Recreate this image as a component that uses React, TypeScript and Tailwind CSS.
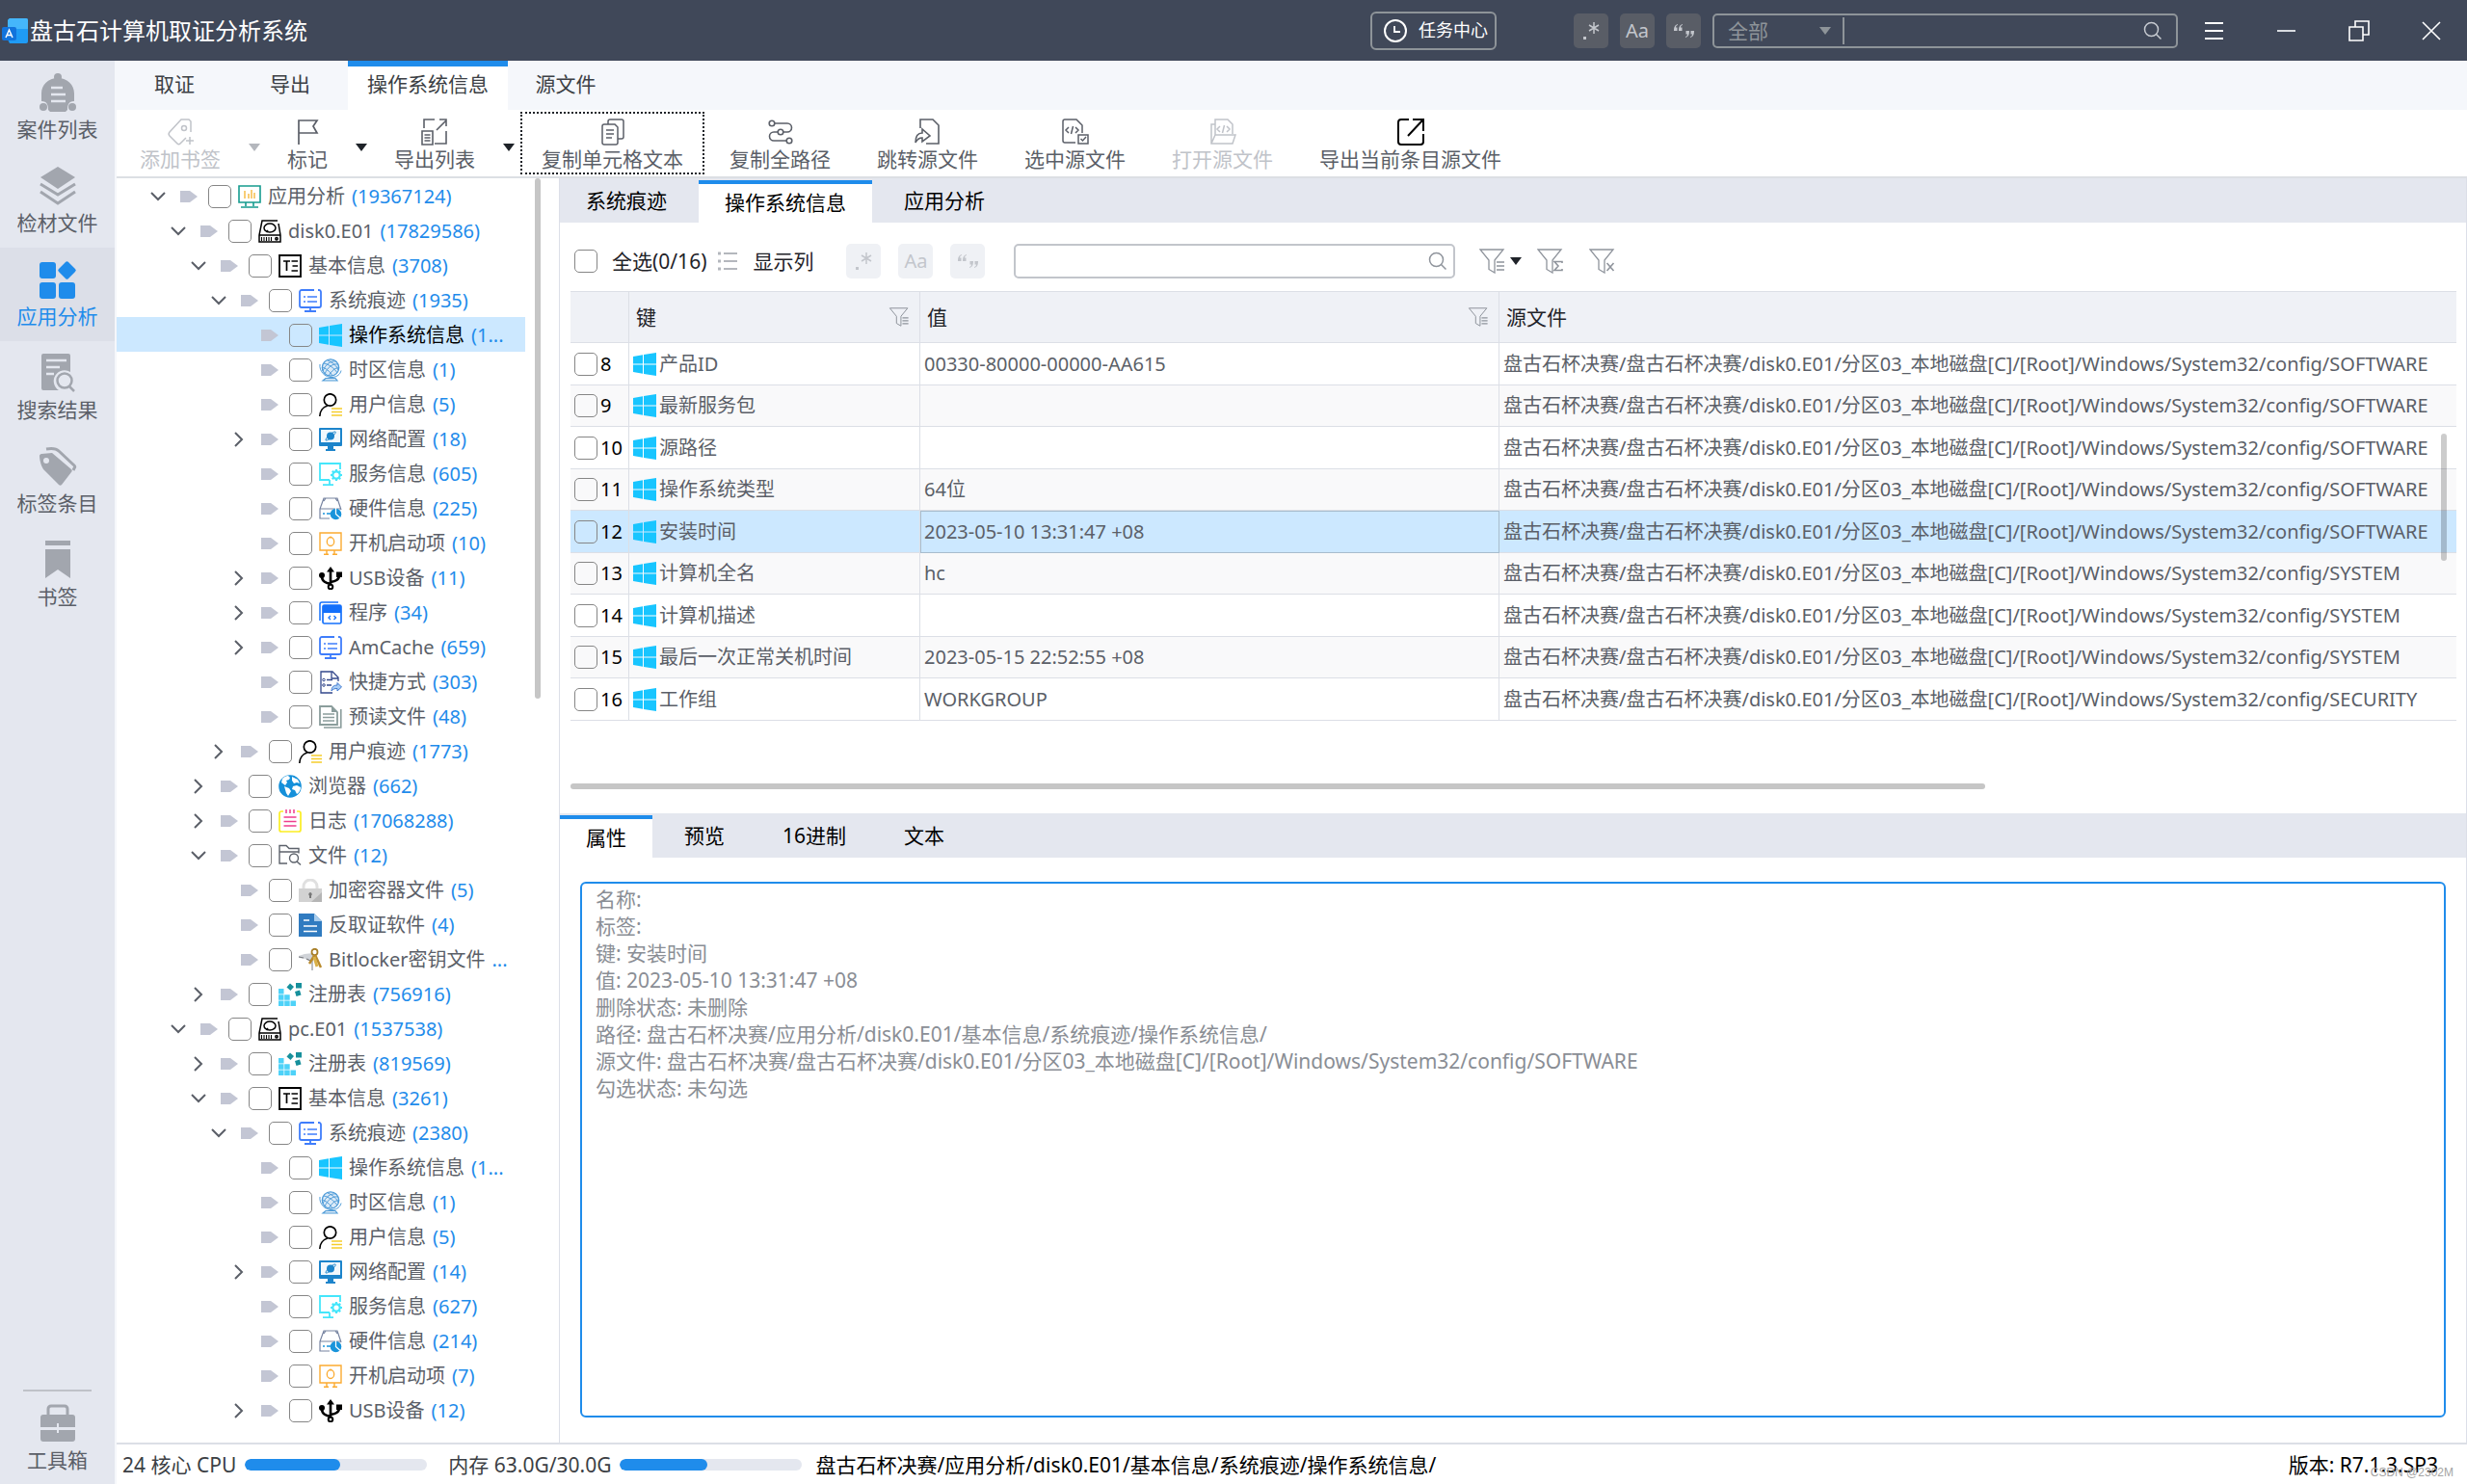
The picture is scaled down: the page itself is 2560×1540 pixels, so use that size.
import { useState } from "react";
import type { ReactNode } from "react";
import clsx from "clsx";

/* ---------- icons ---------- */

function Svg({ children, className = "size-6", box = "0 0 24 24" }: { children: ReactNode; className?: string; box?: string }) {
  return (
    <svg viewBox={box} className={clsx("shrink-0", className)} fill="none" aria-hidden="true">
      {children}
    </svg>
  );
}

const treeIcons: Record<string, ReactNode> = {
  chart: (
    <Svg>
      <g stroke="#169c8f" strokeWidth="1.6">
        <path d="M1 1h22v17H1zM8 18v4M16 18v4M3 23h18" />
      </g>
      <path d="M7 6v8M11 9v5M14 5v9M17 8v6" stroke="#f5b83d" strokeWidth="1.4" />
    </Svg>
  ),
  disk: (
    <Svg>
      <g stroke="#000" strokeWidth="1.5">
        <path d="M20 1H4L1 16v7h22v-7L21 4M1 16h22" />
        <ellipse cx="12" cy="8.5" rx="6" ry="4.5" />
        <path d="M8.5 13l1.5-2" />
        <circle cx="19" cy="19.7" r="1.2" />
        <path d="M3.500 18v4M6 18v4M8.500 18v4M11 18v4M13.500 18v4" strokeWidth="1.1" />
      </g>
    </Svg>
  ),
  info: (
    <Svg>
      <path d="M1 1h22v22H1z" stroke="#000" strokeWidth="1.8" />
      <path d="M5 7h7M8.500 7v10M13.500 7H20M14.500 12H20M13.500 17H20" stroke="#000" strokeWidth="1.7" />
    </Svg>
  ),
  trace: (
    <Svg>
      <path d="M16 1H3a2 2 0 0 0-2 2v14a2 2 0 0 0 2 2h18a2 2 0 0 0 2-2V3a2 2 0 0 0-2-2h-1M12 19v4M6 23h12" stroke="#3f7dfb" strokeWidth="1.8" />
      <path d="M5 8h2M9 8h10M5 13h2M9 13h10" stroke="#3f7dfb" strokeWidth="1.7" />
    </Svg>
  ),
  windows: (
    <Svg>
      <path d="M0 4l10-1.800V11.400H0zM11 2l13-2v11.400H11zM0 12.500h10v9.300L0 20zM11 12.500h13V24l-13-2z" fill="#18c5ff" />
    </Svg>
  ),
  timezone: (
    <Svg>
      <circle cx="12" cy="9.500" r="8.700" fill="#dbeaf7" stroke="#4e9bd8" strokeWidth="1.3" />
      <path d="M4 13C7 6 12 2 18 3M6 16C9 9 14 5 20 6M10 18C13 13 17 9 21 10M5 5c5 1 11 5 14 10M9 2c5 2 10 6 11 10M3 9c4 1 8 4 11 9M1 6c-1 7 5 14 13 13.500 5-.5 8-3 9-7" stroke="#4e9bd8" strokeWidth="1" />
      <path d="M12 19v2M4 23h15l-2-2.500H7z" fill="#dbeaf7" stroke="#4e9bd8" strokeWidth="1.2" />
    </Svg>
  ),
  user: (
    <Svg>
      <path d="M.8 24c0-5 3-9.500 8-11" stroke="#000" strokeWidth="1.6" />
      <circle cx="11.500" cy="7" r="6.200" stroke="#000" strokeWidth="1.7" />
      <path d="M13 16h11M13 19.500h11M13 23h11" stroke="#f6cd2b" strokeWidth="1.7" />
    </Svg>
  ),
  network: (
    <Svg>
      <path d="M1 0h22a1 1 0 0 1 1 1v17a1 1 0 0 1-1 1H1a1 1 0 0 1-1-1V1a1 1 0 0 1 1-1z" fill="#1c84cb" />
      <path d="M2 2h20v13H2z" fill="#f2f8fd" />
      <circle cx="12" cy="8.500" r="4" fill="#1c84cb" />
      <path d="M7 13c-1-2 8-10 10-9s-7 10-10 9z" stroke="#1c84cb" strokeWidth=".9" />
      <path d="M9 19h6v3h2v2H7v-2h2z" fill="#1c84cb" />
    </Svg>
  ),
  service: (
    <Svg>
      <path d="M11 18H1V1h21v6M11 18v5M4 23.200h11" stroke="#45e6fb" strokeWidth="1.8" />
      <circle cx="18" cy="13" r="3.700" stroke="#45e6fb" strokeWidth="2.200" />
      <path d="M18 7v3M18 16v3M12 13h3M21 13h3M13.800 8.800l2 2M20 15l2.200 2.200M22.200 8.800l-2 2M16 15l-2.200 2.200" stroke="#45e6fb" strokeWidth="2.200" />
    </Svg>
  ),
  hardware: (
    <Svg>
      <path d="M23 13L19 1H5L1 12v10h10M1 12h22M7 1l-2 3M17 1l2 3" stroke="#7683a0" strokeWidth="1.2" />
      <path d="M4 17h2M8 17h4" stroke="#1894db" strokeWidth="1.500" />
      <circle cx="17.500" cy="17.500" r="5.800" fill="#1894db" />
      <path d="M17.500 11v6.500l4.500 4" stroke="#fff" strokeWidth="1.200" />
    </Svg>
  ),
  boot: (
    <Svg>
      <path d="M1 1h22v18H1zM8 19v4M16 19v4M5 23.300h5M14 23.300h5" stroke="#fbab31" strokeWidth="1.400" />
      <ellipse cx="12" cy="10" rx="3.700" ry="4.500" stroke="#fbab31" strokeWidth="1.300" />
      <path d="M12 4.500v2" stroke="#fbab31" />
    </Svg>
  ),
  usb: (
    <Svg>
      <path d="M12 3v17M12 18c-4-1-9-2-9-8M12 16c5-1 9-2 9-7" stroke="#000" strokeWidth="2.600" />
      <path d="M12 0l4 5.500H8zM18 5.500h6V11h-6z" fill="#000" />
      <circle cx="3" cy="9" r="3" fill="#000" />
      <circle cx="12" cy="21" r="2.300" fill="#fff" stroke="#000" strokeWidth="2" />
    </Svg>
  ),
  program: (
    <Svg>
      <path d="M1 20V3a2 2 0 0 1 2-2h17" stroke="#1470fb" strokeWidth="1.500" />
      <rect x="4" y="4" width="19" height="19" rx="1.500" stroke="#1470fb" strokeWidth="1.700" />
      <path d="M4 4h19v8H4z" fill="#1470fb" />
      <path d="M12 15l-2 2 2 2M15.500 15l2 2-2 2" stroke="#1470fb" strokeWidth="1.300" />
    </Svg>
  ),
  shortcut: (
    <Svg>
      <path d="M20 11V7l-6-6H2v22h12M13 1v7h7" stroke="#33488c" strokeWidth="1.300" />
      <circle cx="5" cy="9.500" r="1.300" stroke="#33488c" />
      <circle cx="5" cy="15" r="1.300" stroke="#33488c" />
      <path d="M8 9.500h6M8 15h5" stroke="#33488c" strokeWidth="1.300" />
      <path d="M13 21c0-4 2-6 6-6v-2.500l4.500 4.500-4.500 4v-2.500c-3 0-4.500.5-6 2.500z" fill="#a8cdf6" stroke="#3f78cf" />
    </Svg>
  ),
  prefetch: (
    <Svg>
      <path d="M1 1h12l6 6v13H1z" stroke="#8b9d9c" strokeWidth="1.800" />
      <path d="M13 1v6h6z" fill="#8b9d9c" />
      <path d="M4 9h12M4 12.500h12M4 16h12M22.800 4v19H5" stroke="#8b9d9c" strokeWidth="1.600" />
    </Svg>
  ),
  browser: (
    <Svg>
      <circle cx="12" cy="12" r="11.800" fill="#1590da" />
      <path d="M4 4c2-2 4-3 6-3l2 2-1 2-3 1 1 2-2 3-4-3zM14 2l6 3 2 4-3-1-3 1-2-3zM15 12l4-1 4 2c0 3-2 6-4 7l-2-4-3-1zM6 12l5 2 2 3-3 5-2-3z" fill="#fff" />
    </Svg>
  ),
  log: (
    <Svg>
      <path d="M5 2H3a2 2 0 0 0-2 2v17a2 2 0 0 0 2 2h18a2 2 0 0 0 2-2V4a2 2 0 0 0-2-2h-2" stroke="#fbee23" strokeWidth="1.700" />
      <path d="M8 0v4M12 0v4M16 0v4M5.500 8h13M5.500 12.500h13M5.500 17h13" stroke="#ef3d8d" strokeWidth="1.500" />
    </Svg>
  ),
  folder: (
    <Svg>
      <path d="M9 20H1V1.500h7l3 3h10v5M1 8h20" stroke="#5d626b" strokeWidth="1.400" />
      <circle cx="16" cy="14.500" r="4.500" stroke="#5d626b" strokeWidth="1.400" />
      <path d="M19 18l4 3.500" stroke="#5d626b" strokeWidth="1.500" />
    </Svg>
  ),
  lock: (
    <Svg>
      <path d="M5 11V8a7 7 0 0 1 14 0v3" stroke="#e0e0e0" strokeWidth="3" />
      <path d="M0 10h24v14H0z" fill="#d2d2d2" />
      <path d="M13 24l11-10v10z" fill="#b5b5b5" />
      <path d="M12 14a2 2 0 0 1 1 3.500V20h-2v-2.500A2 2 0 0 1 12 14z" fill="#777" />
    </Svg>
  ),
  antiforensic: (
    <Svg>
      <path d="M0 0h16l8 8v16H0z" fill="#307bc0" />
      <path d="M16 0l8 8h-8z" fill="#a9cdec" />
      <path d="M5 7h6M5 13h14M5 18.500h14" stroke="#fff" strokeWidth="1.700" />
    </Svg>
  ),
  key: (
    <Svg>
      <path d="M0 8l6-2 9-1v6l-4 2-4-2-7-1z" fill="#d0d3d8" />
      <path d="M0 9l5 1M8 11l4 2" stroke="#77797e" strokeWidth="1.200" />
      <path d="M14 11v12" stroke="#a6a9ae" strokeWidth="1.500" />
      <ellipse cx="16.500" cy="4" rx="3" ry="3.200" stroke="#a87f28" strokeWidth="1.800" />
      <path d="M16 8l-5 8M17 7l6 13" stroke="#b98a2c" strokeWidth="2.500" />
      <path d="M16 9l3 10" stroke="#d9b048" strokeWidth="3" />
    </Svg>
  ),
  registry: (
    <Svg>
      <path d="M0 6h5.500v5.500H0zM0 12.200h5.500v5.500H0zM6.200 12.200h5.500v5.500H6.200zM0 18.500h5.500V24H0zM6.200 18.500h5.500V24H6.200zM12.500 18.500H18V24h-5.500z" fill="#4ed2f8" />
      <path d="M12 .5l4 3.500-3.500 4-4-3.500zM18 0h6v5.500h-6zM17 9l5-1.500 1.500 5-5 1.500z" fill="#17909c" />
    </Svg>
  ),
};

const toolIcons: Record<string, ReactNode> = {
  tag: (
    <Svg className="size-7" box="0 0 28 28">
      <path d="M25 14V3l-2-2H15L3 14a3 3 0 0 0 0 4l8 8a2 2 0 0 0 3 0l6-6M20 23h8M24 19v8" stroke="currentColor" strokeWidth="1.500" />
      <circle cx="18" cy="10" r="2.500" stroke="currentColor" strokeWidth="1.500" />
    </Svg>
  ),
  flag: (
    <Svg className="size-7" box="0 0 28 28">
      <path d="M5 27V2h19l-4 6 4 7H5" stroke="currentColor" strokeWidth="1.700" />
    </Svg>
  ),
  export: (
    <Svg className="size-7" box="0 0 28 28">
      <path d="M3 10V1h11M14 26h12V13M1 13h11v14H1zM3.500 17h6M3.500 20h6M3.500 23h6M16 12L26 2M19 1h7v7" stroke="currentColor" strokeWidth="1.600" />
    </Svg>
  ),
  copy: (
    <Svg className="size-7" box="0 0 28 28">
      <path d="M9 6V3a2 2 0 0 1 2-2h12a2 2 0 0 1 2 2v16a2 2 0 0 1-2 2h-4M6 6h10l3 3v16a2 2 0 0 1-2 2H5a2 2 0 0 1-2-2V8a2 2 0 0 1 2-2zM7 12h8M7 16h8M7 20h6" stroke="currentColor" strokeWidth="1.500" />
    </Svg>
  ),
  route: (
    <Svg className="size-7" box="0 0 28 28">
      <g stroke="currentColor" strokeWidth="1.600">
        <circle cx="5" cy="5" r="2.800" />
        <circle cx="14" cy="14" r="2.800" />
        <circle cx="23" cy="23" r="2.800" />
        <path d="M8 5h13a4.500 4.500 0 0 1 0 9h-4M11 14H7a4.500 4.500 0 0 0 0 9h13" />
      </g>
    </Svg>
  ),
  jump: (
    <Svg className="size-7" box="0 0 28 28">
      <path d="M6 10V1h13l6 6v19H12M1 25c0-7 3-10 7-10v-4l8 7-8 6v-4c-3 0-5 1-7 5z" stroke="currentColor" strokeWidth="1.600" />
    </Svg>
  ),
  pick: (
    <Svg className="size-7" box="0 0 28 28">
      <path d="M14 25H3a2 2 0 0 1-2-2V3a2 2 0 0 1 2-2h12l6 6v8M17 17h10v9H17zM19.500 21l2 2 3.500-4M7 9l-3 3 3 3M14 9l3 3-3 3M11.500 8l-2 8" stroke="currentColor" strokeWidth="1.500" />
    </Svg>
  ),
  open: (
    <Svg className="size-7" box="0 0 28 28">
      <path d="M6 17V1h13l5 5v10M6 6H2v20h22l3-9H6L2 26M11 8l-3 3 3 3M18 8l3 3-3 3M15.500 7l-2 8" stroke="currentColor" strokeWidth="1.500" />
    </Svg>
  ),
  external: (
    <Svg className="size-7" box="0 0 28 28">
      <path d="M12 1H4a3 3 0 0 0-3 3v20a3 3 0 0 0 3 3h20a3 3 0 0 0 3-3v-8M16 1h11v12M26 2L11 18" stroke="#000" strokeWidth="2" />
    </Svg>
  ),
};

const railIcons: Record<string, ReactNode> = {
  cases: (
    <Svg className="size-10" box="0 0 40 40">
      <g fill="currentColor">
        <circle cx="20" cy="4" r="4" />
        <path d="M20 5c10 0 17 7 17 16v8c-6 0-7 4-7 9l-2 2H12l-2-2c0-5-1-9-7-9v-8C3 12 10 5 20 5z" />
        <circle cx="5" cy="35" r="4" />
        <circle cx="35" cy="35" r="4" />
      </g>
      <path d="M13 15h12M13 22h15M13 29h15" stroke="#e4e7ef" strokeWidth="2.500" />
    </Svg>
  ),
  layers: (
    <Svg className="size-10" box="0 0 40 40">
      <path d="M20 0l18 11-18 12L2 11z" fill="currentColor" />
      <path d="M2 18l18 11 18-11M2 26l18 12 18-12" stroke="currentColor" strokeWidth="3" />
    </Svg>
  ),
  apps: (
    <Svg className="size-10" box="0 0 40 40">
      <g fill="currentColor">
        <rect x="1" y="2" width="17" height="17" rx="3" />
        <rect x="1" y="23" width="17" height="17" rx="3" />
        <rect x="21" y="23" width="17" height="17" rx="3" />
        <path d="M28 2a2 2 0 0 1 3 0l7 7a2 2 0 0 1 0 3l-7 7a2 2 0 0 1-3 0l-7-7a2 2 0 0 1 0-3z" />
      </g>
    </Svg>
  ),
  search: (
    <Svg className="size-10" box="0 0 40 40">
      <path d="M5 0h26a2 2 0 0 1 2 2v17a11 11 0 0 0-12 19H5a2 2 0 0 1-2-2V2a2 2 0 0 1 2-2z" fill="currentColor" />
      <path d="M8 7h21M8 14h14M8 21h8" stroke="#e4e7ef" strokeWidth="2.500" />
      <circle cx="27" cy="28" r="7.500" stroke="currentColor" strokeWidth="2.500" />
      <path d="M32 34l5 5" stroke="currentColor" strokeWidth="2.500" />
    </Svg>
  ),
  tags: (
    <Svg className="size-10" box="0 0 40 40">
      <path d="M3 7l11-1 20 17c1 1 1 2 0 3L24 39c-1 1-2 1-3 0L5 23C2 18 1 12 1 9c0-1 1-2 2-2z" fill="currentColor" />
      <path d="M8 2c6-1 10-1 13 2l16 15c1 1 1 2 0 3l-1 2" stroke="currentColor" strokeWidth="3" />
      <circle cx="8" cy="14" r="3" fill="#e4e7ef" />
    </Svg>
  ),
  bookmark: (
    <Svg className="size-10" box="0 0 40 40">
      <path d="M7 0h26v5H7zM7 9h26v30l-13-9-13 9z" fill="currentColor" />
    </Svg>
  ),
  toolbox: (
    <Svg className="size-10" box="0 0 40 40">
      <path d="M10 12V5a3 3 0 0 1 3-3h14a3 3 0 0 1 3 3v7" stroke="currentColor" strokeWidth="3" />
      <path d="M5 11h30a3 3 0 0 1 3 3v10H2V14a3 3 0 0 1 3-3zM2 27h36v9a3 3 0 0 1-3 3H5a3 3 0 0 1-3-3z" fill="currentColor" />
      <path d="M20 20v10M16 25.500h8" stroke="#e4e7ef" strokeWidth="2" />
    </Svg>
  ),
};

function Magnifier({ className }: { className?: string }) {
  return (
    <Svg className={clsx("size-5", className)} box="0 0 20 20">
      <circle cx="8.500" cy="8.500" r="7" stroke="currentColor" strokeWidth="1.500" />
      <path d="M13.500 13.500l5 5" stroke="currentColor" strokeWidth="1.500" />
    </Svg>
  );
}

function Funnel({ mark, className = "size-6" }: { mark: "list" | "sum" | "clear"; className?: string }) {
  const marks = {
    list: "M18 14h8M18 18h8M18 22h8",
    sum: "M26 15v-1.500h-8l4 4.500-4 4.500h8V21",
    clear: "M18.500 15l7 8M25.500 15l-7 8",
  };
  return (
    <Svg className={className} box="0 0 27 26">
      <path d="M1 1h24l-9 11v13l-6-3.500V12z" stroke="#8f949c" strokeWidth="1.300" />
      <path d={marks[mark]} stroke="#8f949c" strokeWidth="1.600" />
    </Svg>
  );
}

function Caret({ className = "text-[#1f2329]" }: { className?: string }) {
  return (
    <Svg className={clsx("h-2 w-3", className)} box="0 0 12 8">
      <path d="M0 0h12L6 8z" fill="currentColor" />
    </Svg>
  );
}

/* ---------- data ---------- */

type Node = { depth: number; icon: string; name: string; count: string; open?: boolean };

const tree: Node[] = [
  { depth: 0, icon: "chart", name: "应用分析", count: "(19367124)", open: true },
  { depth: 1, icon: "disk", name: "disk0.E01", count: "(17829586)", open: true },
  { depth: 2, icon: "info", name: "基本信息", count: "(3708)", open: true },
  { depth: 3, icon: "trace", name: "系统痕迹", count: "(1935)", open: true },
  { depth: 4, icon: "windows", name: "操作系统信息", count: "(1..." },
  { depth: 4, icon: "timezone", name: "时区信息", count: "(1)" },
  { depth: 4, icon: "user", name: "用户信息", count: "(5)" },
  { depth: 4, icon: "network", name: "网络配置", count: "(18)", open: false },
  { depth: 4, icon: "service", name: "服务信息", count: "(605)" },
  { depth: 4, icon: "hardware", name: "硬件信息", count: "(225)" },
  { depth: 4, icon: "boot", name: "开机启动项", count: "(10)" },
  { depth: 4, icon: "usb", name: "USB设备", count: "(11)", open: false },
  { depth: 4, icon: "program", name: "程序", count: "(34)", open: false },
  { depth: 4, icon: "trace", name: "AmCache", count: "(659)", open: false },
  { depth: 4, icon: "shortcut", name: "快捷方式", count: "(303)" },
  { depth: 4, icon: "prefetch", name: "预读文件", count: "(48)" },
  { depth: 3, icon: "user", name: "用户痕迹", count: "(1773)", open: false },
  { depth: 2, icon: "browser", name: "浏览器", count: "(662)", open: false },
  { depth: 2, icon: "log", name: "日志", count: "(17068288)", open: false },
  { depth: 2, icon: "folder", name: "文件", count: "(12)", open: true },
  { depth: 3, icon: "lock", name: "加密容器文件", count: "(5)" },
  { depth: 3, icon: "antiforensic", name: "反取证软件", count: "(4)" },
  { depth: 3, icon: "key", name: "Bitlocker密钥文件", count: "..." },
  { depth: 2, icon: "registry", name: "注册表", count: "(756916)", open: false },
  { depth: 1, icon: "disk", name: "pc.E01", count: "(1537538)", open: true },
  { depth: 2, icon: "registry", name: "注册表", count: "(819569)", open: false },
  { depth: 2, icon: "info", name: "基本信息", count: "(3261)", open: true },
  { depth: 3, icon: "trace", name: "系统痕迹", count: "(2380)", open: true },
  { depth: 4, icon: "windows", name: "操作系统信息", count: "(1..." },
  { depth: 4, icon: "timezone", name: "时区信息", count: "(1)" },
  { depth: 4, icon: "user", name: "用户信息", count: "(5)" },
  { depth: 4, icon: "network", name: "网络配置", count: "(14)", open: false },
  { depth: 4, icon: "service", name: "服务信息", count: "(627)" },
  { depth: 4, icon: "hardware", name: "硬件信息", count: "(214)" },
  { depth: 4, icon: "boot", name: "开机启动项", count: "(7)" },
  { depth: 4, icon: "usb", name: "USB设备", count: "(12)", open: false },
];

const configDir = "盘古石杯决赛/盘古石杯决赛/disk0.E01/分区03_本地磁盘[C]/[Root]/Windows/System32/config/";

const rows = [
  { no: 8, name: "产品ID", value: "00330-80000-00000-AA615", hive: "SOFTWARE" },
  { no: 9, name: "最新服务包", value: "", hive: "SOFTWARE" },
  { no: 10, name: "源路径", value: "", hive: "SOFTWARE" },
  { no: 11, name: "操作系统类型", value: "64位", hive: "SOFTWARE" },
  { no: 12, name: "安装时间", value: "2023-05-10 13:31:47 +08", hive: "SOFTWARE" },
  { no: 13, name: "计算机全名", value: "hc", hive: "SYSTEM" },
  { no: 14, name: "计算机描述", value: "", hive: "SYSTEM" },
  { no: 15, name: "最后一次正常关机时间", value: "2023-05-15 22:52:55 +08", hive: "SYSTEM" },
  { no: 16, name: "工作组", value: "WORKGROUP", hive: "SECURITY" },
];

const railItems = [
  { icon: "cases", label: "案件列表" },
  { icon: "layers", label: "检材文件" },
  { icon: "apps", label: "应用分析", active: true },
  { icon: "search", label: "搜索结果" },
  { icon: "tags", label: "标签条目" },
  { icon: "bookmark", label: "书签" },
];

const tools = [
  { icon: "tag", label: "添加书签", menu: true, disabled: true },
  { icon: "flag", label: "标记", menu: true },
  { icon: "export", label: "导出列表", menu: true },
  { icon: "copy", label: "复制单元格文本", focused: true },
  { icon: "route", label: "复制全路径" },
  { icon: "jump", label: "跳转源文件" },
  { icon: "pick", label: "选中源文件" },
  { icon: "open", label: "打开源文件", disabled: true },
  { icon: "external", label: "导出当前条目源文件" },
];

const details = `名称:
标签:
键: 安装时间
值: 2023-05-10 13:31:47 +08
删除状态: 未删除
路径: 盘古石杯决赛/应用分析/disk0.E01/基本信息/系统痕迹/操作系统信息/
源文件: ${configDir}SOFTWARE
勾选状态: 未勾选`;

/* ---------- pieces ---------- */

const checkbox = "size-6 shrink-0 appearance-none rounded-[5px] border border-[#868686] checked:bg-[#1f8ceb]";

function MatchButtons({ dark }: { dark?: boolean }) {
  const cls = clsx(
    "flex size-9 items-center justify-center rounded-[5px] text-[20px] leading-none",
    dark ? "bg-[#595d66] text-[#c3c6cc]" : "bg-[#eff1f5] text-[#c3c6cc]"
  );
  return (
    <>
      <button className={cls} aria-label="正则表达式">
        <Svg box="0 0 24 24">
          <path d="M15 3v12M10 6l10 6M20 6l-10 6" stroke="currentColor" strokeWidth="1.500" />
          <path d="M4 18h3v3H4z" fill="currentColor" />
        </Svg>
      </button>
      <button className={cls} aria-label="区分大小写">Aa</button>
      <button className={cls} aria-label="全词匹配">
        <Svg box="0 0 24 24">
          <path d="M6 5C3 6 2 8 2 12h3.500V8.500H4C4 7 5 6 6 6zM11 5C8 6 7 8 7 12h3.500V8.500H9C9 7 10 6 11 6zM14 19c3-1 4-3 4-7h-3.500v3.500H16c0 1.500-1 2.500-2 2.500zM19 19c3-1 4-3 4-7h-3.500v3.500H21c0 1.500-1 2.500-2 2.500z" fill="currentColor" />
        </Svg>
      </button>
    </>
  );
}

function TitleBar() {
  const winButton = "flex h-full w-[75px] items-center justify-center";
  return (
    <header className="flex h-[63px] shrink-0 items-center bg-[#404859] text-white">
      <Svg className="ml-0.5 size-7" box="0 0 28 28">
        <path d="M8 1h17a2 2 0 0 1 2 2v22a2 2 0 0 1-2 2H8l-2-4V3z" fill="#1f9bf5" />
        <path d="M8 1h17a2 2 0 0 1 2 2v9H6V3z" fill="#45b6fb" />
        <rect x="0" y="10" width="15" height="14" rx="2" fill="#1273dc" />
        <path d="M4 21l3.500-8 3.500 8M5.500 18.500h4" stroke="#fff" strokeWidth="1.500" />
      </Svg>
      <h1 className="ml-px text-[24px] leading-8">盘古石计算机取证分析系统</h1>

      <button className="mr-20 ml-auto flex h-10 w-[131px] items-center gap-3 rounded-md border-2 border-[#8e9499] pl-3 text-[18px] whitespace-nowrap">
        <Svg>
          <circle cx="12" cy="12" r="11" stroke="#fff" strokeWidth="2" />
          <path d="M11 7v6h6" stroke="#fff" strokeWidth="1.800" />
        </Svg>
        任务中心
      </button>
      <div className="flex items-center gap-3">
        <MatchButtons dark />
        <div className="flex h-9 w-[483px] items-center rounded-[5px] border-2 border-[#8e9499] text-[#8e9499]">
          <div className="flex h-7 w-[135px] items-center border-r-2 border-[#8e9499] pr-3">
            <select aria-label="搜索范围" className="min-w-0 flex-1 appearance-none bg-transparent pl-3.5 text-[21px] leading-7 outline-none">
              <option>全部</option>
            </select>
            <Caret className="text-[#8e9499]" />
          </div>
          <input aria-label="搜索" className="min-w-0 flex-1 bg-transparent px-2 text-[20px] outline-none" />
          <Magnifier className="mr-3.5 text-[#c6cad0]" />
        </div>
      </div>
      <button className={winButton} aria-label="菜单">
        <Svg className="size-5" box="0 0 20 20">
          <path d="M0 2h19M0 10h19M0 18h19" stroke="#fff" strokeWidth="1.800" />
        </Svg>
      </button>
      <button className={winButton} aria-label="最小化">
        <Svg className="size-5" box="0 0 20 20">
          <path d="M0 10h19" stroke="#d8dbe0" strokeWidth="2" />
        </Svg>
      </button>
      <button className={winButton} aria-label="还原">
        <Svg className="size-6" box="0 0 24 24">
          <path d="M2 8h14v14H2zM8 8V2h14v14h-6" stroke="#fff" strokeWidth="1.600" />
        </Svg>
      </button>
      <button className={winButton} aria-label="关闭">
        <Svg className="size-5" box="0 0 20 20">
          <path d="M1 1l18 18M19 1L1 19" stroke="#fff" strokeWidth="1.600" />
        </Svg>
      </button>
    </header>
  );
}

function Rail() {
  return (
    <nav className="flex w-[119px] shrink-0 flex-col bg-[#e4e7ef] text-[21px] leading-7 text-[#5b5f68]">
      {railItems.map((item) => (
        <button
          key={item.label}
          className={clsx(
            "flex h-[97px] flex-col items-center gap-1 pt-[13px]",
            item.active && "bg-[#dcdfe8] text-[#1f8ceb]"
          )}
        >
          <span className={item.active ? "text-[#1f8ceb]" : "text-[#a2a6ae]"}>{railIcons[item.icon]}</span>
          {item.label}
        </button>
      ))}
      <button className="mx-6 mt-auto flex h-[98px] flex-col items-center gap-1 border-t-2 border-[#bfc2c8] pt-[13px]">
        <span className="text-[#a2a6ae]">{railIcons.toolbox}</span>
        <span className="whitespace-nowrap">工具箱</span>
      </button>
    </nav>
  );
}

function TopTabs() {
  const tabs = ["取证", "导出", "操作系统信息", "源文件"];
  return (
    <div className="flex h-[51px] bg-[#f5f7fb] text-[21px] leading-7 text-[#3c3f45]">
      {tabs.map((tab, i) => (
        <button
          key={tab}
          className={clsx(
            "min-w-[120px] border-t-6 px-5 pb-2.5",
            i === 2 ? "border-[#1f8ceb] bg-white" : "border-transparent"
          )}
        >
          {tab}
        </button>
      ))}
    </div>
  );
}

function Toolbar() {
  return (
    <div className="flex h-[71px] border-b-2 border-[#dcdfe4] bg-white text-[21px] leading-7 text-[#5b5f68]">
      {tools.map((tool) => (
        <div key={tool.label} className="flex">
          <button
            disabled={tool.disabled}
            className={clsx(
              "flex flex-col items-center px-6 pt-[9px] whitespace-nowrap",
              tool.disabled && "text-[#c0c3c9]",
              tool.focused && "outline-2 -outline-offset-4 outline-dotted outline-[#1f2329]"
            )}
          >
            {toolIcons[tool.icon]}
            {tool.label}
          </button>
          {tool.menu && (
            <button aria-label={`${tool.label}选项`} disabled={tool.disabled} className="flex w-[21px] items-center justify-center pt-2">
              <Caret className={tool.disabled ? "text-[#b4b7bd]" : "text-[#1f2329]"} />
            </button>
          )}
        </div>
      ))}
    </div>
  );
}

function Tree() {
  const [selected, setSelected] = useState(4);
  return (
    <aside className="flex w-[460px] shrink-0 items-start border-r border-[#dcdfe8] bg-white">
      <ul className="w-[424px] text-[20px] leading-7 text-[#5b5f68]">
        {tree.map((node, i) => (
          <li
            key={i}
            onClick={() => setSelected(i)}
            className={clsx("flex h-9 items-center pt-px whitespace-nowrap", i === selected && "bg-[#cce8ff] text-black")}
            style={{ paddingLeft: 33 + node.depth * 21 }}
          >
            <span className="flex w-5 text-[#5b5f68]">
              {node.open !== undefined && (
                <button aria-label={node.open ? "折叠" : "展开"}>
                  <Svg className="size-5" box="0 0 20 20">
                    <path d={node.open ? "M3 6l7 7 7-7" : "M6 3l7 7-7 7"} stroke="currentColor" strokeWidth="2" />
                  </Svg>
                </button>
              )}
            </span>
            <Svg className="ml-[13px] h-3 w-[18px]" box="0 0 18 12">
              <path d="M0 0h10l8 6-8 6H0z" fill="#c3c6d4" />
            </Svg>
            <label className="ml-[11px] flex items-center gap-[7px]">
              <input type="checkbox" className={checkbox} />
              {treeIcons[node.icon]}
              <span>{node.name}</span>
              <span className="text-[#1f8ceb]">{node.count}</span>
            </label>
          </li>
        ))}
      </ul>
      <div className="ml-2.5 h-[540px] w-1.5 rounded-full bg-[#c6c6c6]" />
    </aside>
  );
}

function PaneTabs({ tabs, active }: { tabs: string[]; active: string }) {
  return (
    <div className="flex h-[46px] gap-1.5 bg-[#e4e7ef] pt-0.5 text-[21px] leading-7 text-black">
      {tabs.map((tab) => (
        <button
          key={tab}
          className={clsx("px-[27px] pb-0.5", tab === active && "border-t-4 border-[#1f8ceb] bg-white")}
        >
          {tab}
        </button>
      ))}
    </div>
  );
}

function FilterBar() {
  return (
    <div className="flex h-[71px] items-center pt-2 pl-[15px] text-[21px] leading-7 text-[#1f2329]">
      <label className="flex items-center gap-[15px]">
        <input type="checkbox" className={checkbox} />
        全选(0/16)
      </label>
      <button className="ml-3 flex items-center gap-4">
        <Svg className="size-5" box="0 0 20 20">
          <path d="M6 2h14M6 10h14M6 18h14" stroke="#b4b7bd" strokeWidth="1.800" />
          <path d="M0 2h3M0 10h3M0 18h3" stroke="#b4b7bd" strokeWidth="3" />
        </Svg>
        显示列
      </button>
      <div className="ml-[34px] flex gap-[18px]">
        <MatchButtons />
      </div>
      <div className="ml-[30px] flex h-9 w-[458px] items-center rounded-[5px] border-2 border-[#c2c5cb]">
        <input aria-label="筛选" className="min-w-0 flex-1 bg-transparent px-2 text-[20px] outline-none" />
        <Magnifier className="mr-1.5 text-[#8f949c]" />
      </div>
      <button aria-label="筛选条件" className="ml-[25px] flex items-center gap-[5px]">
        <Funnel mark="list" className="h-[26px] w-[27px]" />
        <Caret />
      </button>
      <button aria-label="汇总筛选" className="ml-4">
        <Funnel mark="sum" className="h-[26px] w-[27px]" />
      </button>
      <button aria-label="清除筛选" className="ml-[27px]">
        <Funnel mark="clear" className="h-[26px] w-[27px]" />
      </button>
    </div>
  );
}

function DataTable() {
  const th = "border-y border-r border-[#dcdfe6] pl-[7px] text-left font-normal";
  const td = "overflow-hidden border-r border-b border-[#dcdfe6] pl-1 whitespace-nowrap";
  return (
    <div className="relative mr-2.5 ml-[11px]">
      <table className="w-full table-fixed border-separate border-spacing-0 text-[20px] leading-7 text-[#5b5f68]">
        <colgroup>
          <col className="w-[61px]" />
          <col className="w-[302px]" />
          <col className="w-[601px]" />
          <col />
        </colgroup>
        <thead className="bg-[#eff1f6] text-[21px] text-[#1f2329]">
          <tr className="h-[54px]">
            <th className={th} aria-label="序号" />
            <th className={th}>
              <div className="flex items-center justify-between pr-2.5">
                键
                <Funnel mark="list" className="h-5 w-[22px]" />
              </div>
            </th>
            <th className={th}>
              <div className="flex items-center justify-between pr-2.5">
                值
                <Funnel mark="list" className="h-5 w-[22px]" />
              </div>
            </th>
            <th className={clsx(th, "border-r-0")}>源文件</th>
          </tr>
        </thead>
        <tbody>
          {rows.map((row) => {
            const on = row.no === 12;
            return (
              <tr key={row.no} className={clsx("odd:h-11 even:h-[43px]", on ? "bg-[#cce8ff]" : "even:bg-[#f9f9fa]")}>
                <td className={td}>
                  <label className="flex items-center gap-[3px] text-black">
                    <input type="checkbox" className={checkbox} />
                    {row.no}
                  </label>
                </td>
                <td className={td}>
                  <div className="flex items-center gap-[3px]">
                    {treeIcons.windows}
                    {row.name}
                  </div>
                </td>
                <td className={clsx(td, on && "outline-1 -outline-offset-1 outline-[#a8bccd]")}>{row.value}</td>
                <td className={clsx(td, "border-r-0")}>{configDir + row.hive}</td>
              </tr>
            );
          })}
        </tbody>
      </table>
      <div className="absolute top-[148px] right-2.5 h-[132px] w-1.5 rounded-full bg-black/20" />
      <div className="mt-[65px] mb-[25px] h-1.5 w-3/4 rounded-full bg-[#c6c6c6]" />
    </div>
  );
}

function Meter({ label, percent }: { label: string; percent: number }) {
  return (
    <div className="flex items-center gap-[9px]">
      {label}
      <div role="progressbar" aria-label={label} aria-valuenow={percent} className="h-3 w-[189px] overflow-hidden rounded-full bg-[#e4e7ef]">
        <div className="h-full rounded-full bg-[#1f8ceb]" style={{ width: `${percent}%` }} />
      </div>
    </div>
  );
}

function StatusBar() {
  return (
    <footer className="relative flex h-[43px] items-center border-t-2 border-[#dcdfe6] bg-white pr-[30px] pl-1.5 text-[21px] leading-7 whitespace-nowrap text-[#3c3f45]">
      <Meter label="24 核心 CPU" percent={52} />
      <div className="ml-[22px]">
        <Meter label="内存 63.0G/30.0G" percent={48} />
      </div>
      <span className="ml-3.5 text-black">盘古石杯决赛/应用分析/disk0.E01/基本信息/系统痕迹/操作系统信息/</span>
      <span className="ml-auto text-black">版本: R7.1.3.SP3</span>
      <span className="absolute right-3.5 bottom-1 font-['Liberation_Sans',sans-serif] text-[12px] leading-4 text-[#a4a4a4]">CSDN @2302M</span>
    </footer>
  );
}

export default function App() {
  return (
    <div className="flex min-h-screen flex-col bg-[#f5f7fb] font-['Noto_Sans','Noto_Sans_CJK_SC',sans-serif]">
      <TitleBar />
      <div className="flex flex-1 gap-0.5">
        <Rail />
        <div className="flex min-w-0 flex-1 flex-col">
          <TopTabs />
          <Toolbar />
          <div className="flex flex-1">
            <Tree />
            <main className="flex min-w-0 flex-1 flex-col border-r border-[#dcdfe8] bg-white">
              <PaneTabs tabs={["系统痕迹", "操作系统信息", "应用分析"]} active="操作系统信息" />
              <FilterBar />
              <DataTable />
              <PaneTabs tabs={["属性", "预览", "16进制", "文本"]} active="属性" />
              <div className="flex flex-1 pt-[25px] pr-[21px] pb-[26px] pl-[21px]">
                <textarea
                  readOnly
                  aria-label="属性"
                  value={details}
                  className="flex-1 resize-none rounded-md border-2 border-[#1f8ceb] px-3.5 py-0.5 text-[21px] leading-7 text-[#8a8e95] outline-none"
                />
              </div>
            </main>
          </div>
          <StatusBar />
        </div>
      </div>
    </div>
  );
}
